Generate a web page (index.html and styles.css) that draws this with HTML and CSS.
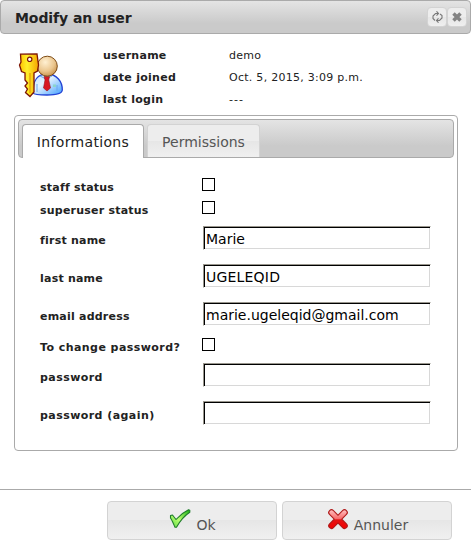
FILE: index.html
```html
<!DOCTYPE html>
<html lang="en">
<head>
<meta charset="utf-8">
<title>Modify an user</title>
<link rel="stylesheet" href="styles.css">
</head>
<body>
<div class="dialog">
  <header class="titlebar">
    <h1>Modify an user</h1>
    <button class="tool" aria-label="Refresh"><svg width="12" height="12" viewBox="0 0 12 12" fill="none" stroke="#777" stroke-width="1.100"><path d="M7 2.500H4.500L2 5V7.500L4 9.500M5.500 .3L7.500 2.500L5.500 4.700M9 3L11 4.500V7L8.500 9.500H6M7.500 7.300L5.500 9.500L7.500 11.700"/></svg></button>
    <button class="tool" aria-label="Close"><svg width="12" height="12" viewBox="0 0 12 12"><path d="M2.500 2.500L9.500 9.500M9.500 2.500L2.500 9.500" stroke="#838383" stroke-width="3.500"/></svg></button>
  </header>
  <section class="summary">
    <svg class="avatar" width="46" height="46" viewBox="0 0 46 46">
      <defs>
        <linearGradient id="body" x1="0" y1="0" x2="1" y2="1"><stop offset="0" stop-color="#c2e4ff"/><stop offset=".4" stop-color="#e4f3ff"/><stop offset="1" stop-color="#3e9dff"/></linearGradient>
        <radialGradient id="head" cx=".4" cy=".3" r=".75"><stop offset="0" stop-color="#fff0d2"/><stop offset=".6" stop-color="#ebc68e"/><stop offset="1" stop-color="#c58f48"/></radialGradient>
        <linearGradient id="key" x1="0" y1="0" x2="1" y2="0"><stop offset="0" stop-color="#ffc000"/><stop offset=".4" stop-color="#fff02a"/><stop offset="1" stop-color="#f5a300"/></linearGradient>
      </defs>
      <path d="M15 40C15 27 19 21 29 21C39 21 44.500 29 44.300 37C44 41 38 42 29 42C21 42 16 41.500 15 40Z" fill="url(#body)" stroke="#2242d4" stroke-width="1.300"/>
      <path d="M22 23L28 26L34 23M19 31V39M39 32V38" fill="none" stroke="#6aa8ee"/>
      <path d="M26 23.500H31.500L30.800 27L32.500 35L29 38L25.500 35L27 27Z" fill="#d81822" stroke="#8f1020" stroke-width=".6"/>
      <path d="M35 31.500H38V34H35Z" fill="#8bd5c9"/>
      <circle cx="29.300" cy="13.200" r="10" fill="url(#head)" stroke="#7d4a13" stroke-width="1"/>
      <path d="M2.500 1.200L19 1L20.500 12L19.500 18L16 20V39L12 43.500L7.500 39.500L9.500 36L7 33L9.500 30L7 27V20L3.500 18.500L1.500 12L3 9Z" fill="url(#key)" stroke="#7d1606" stroke-width="1.300"/>
      <path d="M12 20V40" stroke="#dc8b00" stroke-width="1"/>
      <circle cx="11.700" cy="6.300" r="2.200" fill="#fff" stroke="#7d1606" stroke-width="1.200"/>
    </svg>
    <dl>
      <dt>username</dt><dd>demo</dd>
      <dt>date joined</dt><dd>Oct. 5, 2015, 3:09 p.m.</dd>
      <dt>last login</dt><dd class="empty">---</dd>
    </dl>
  </section>
  <section class="tabs">
    <nav class="tabbar"><a class="tab active">Informations</a><a class="tab">Permissions</a></nav>
    <form class="fields">
      <div class="row short"><label for="staff">staff status</label><input id="staff" type="checkbox"></div>
      <div class="row short"><label for="super">superuser status</label><input id="super" type="checkbox"></div>
      <div class="row"><label for="first">first name</label><input id="first" type="text" value="Marie"></div>
      <div class="row"><label for="last">last name</label><input id="last" type="text" value="UGELEQID"></div>
      <div class="row"><label for="email">email address</label><input id="email" type="text" value="marie.ugeleqid@gmail.com"></div>
      <div class="row short"><label class="wide" for="change">To change password?</label><input id="change" type="checkbox"></div>
      <div class="row"><label class="wide" for="pw">password</label><input id="pw" type="password"></div>
      <div class="row"><label class="wide" for="pw2">password (again)</label><input id="pw2" type="password"></div>
    </form>
  </section>
  <footer class="actions">
    <button class="action"><svg width="24" height="24" viewBox="0 0 24 24"><defs><linearGradient id="green" x1="0" y1="1" x2="1" y2="0"><stop offset="0" stop-color="#58d83c"/><stop offset=".45" stop-color="#baff72"/><stop offset="1" stop-color="#16b010"/></linearGradient></defs><path d="M2.500 7.500L4.500 7L8 11.500C11 8 16 4 20.500 1.800L21.800 2.200V4.300C16 8 12 13 8.500 19.300H7C5.500 16 4 12 2.500 10Z" fill="url(#green)" stroke="#1f7c2b" stroke-width="1.100" stroke-linejoin="round"/></svg><span>Ok</span></button>
    <button class="action"><svg width="24" height="24" viewBox="0 0 24 24"><defs><linearGradient id="red" gradientUnits="userSpaceOnUse" x1="0" y1="2" x2="0" y2="21"><stop offset="0" stop-color="#ffc0c0"/><stop offset=".45" stop-color="#f86c6c"/><stop offset=".52" stop-color="#e31313"/><stop offset="1" stop-color="#f60000"/></linearGradient></defs><g fill="none" stroke-linecap="round"><path d="M5.500 4.500L18.500 17.700M18.500 4.500L5.500 17.700" stroke="#b01a1a" stroke-width="6.600"/><path d="M5.500 4.500L18.500 17.700M18.500 4.500L5.500 17.700" stroke="url(#red)" stroke-width="4.400"/></g></svg><span>Annuler</span></button>
  </footer>
</div>
</body>
</html>
```
FILE: styles.css
```css
* { box-sizing: border-box; }
body { margin: 0; background: #fff; color: #222; font-family: "DejaVu Sans", Verdana, sans-serif; font-size: 14px; }
button { font: inherit; margin: 0; padding: 0; }
.dialog { width: 471px; height: 553px; overflow: hidden; }
.titlebar { display: flex; align-items: center; height: 34px; padding: 0 3px 0 14px; border: 1px solid #aaa; border-radius: 4px; background: linear-gradient(#e4e4e4, #cacaca 70%, #cacaca); }
.titlebar h1 { flex: 1; margin: 2px 0 0; font-size: 14px; line-height: 20px; letter-spacing: -.07px; }
.tool { display: flex; align-items: center; justify-content: center; width: 20px; height: 20px; border: 1px solid #d3d3d3; border-radius: 4px; background: linear-gradient(#ededed 50%, #e6e6e6 50%, #efefef); }
.summary { display: flex; height: 81px; padding: 10px 0 0 18px; }
.avatar { margin-top: 9px; }
.summary dl { display: grid; grid-template-columns: 126px 1fr; grid-auto-rows: 22px; flex: 1; margin: 1px 0 0 39px; font-size: 11px; line-height: 22px; letter-spacing: .27px; }
dt, label { font-weight: bold; }
dd { margin: 0; }
dd.empty { letter-spacing: 1px; }
.tabs { width: 444px; height: 336px; margin-left: 14px; padding: 3px; border: 1px solid #aaa; border-radius: 4px; }
.tabbar { display: flex; gap: 3px; height: 39px; padding: 4px 3px 0; border: 1px solid #aaa; border-radius: 4px; background: linear-gradient(#e4e4e4, #cacaca 70%, #cacaca); }
.tab { width: 113px; height: 33px; border: 1px solid #d3d3d3; border-bottom: 0; border-radius: 4px 4px 0 0; background: linear-gradient(#ededed 50%, #e6e6e6 50%, #f0f0f0); color: #555; line-height: 35px; text-align: center; }
.tab.active { width: 122px; height: 34px; border-color: #aaa; background: #fff; color: #212121; letter-spacing: .33px; }
.fields { padding: 15px 22px 0; }
.row { display: flex; align-items: center; height: 38px; }
.row.short { height: 23px; }
.row label { width: 162px; padding-top: 6px; font-size: 11px; line-height: 16px; letter-spacing: .22px; }
.row label.wide { letter-spacing: .44px; }
input { margin: 0; }
input[type="checkbox"] { appearance: none; width: 13px; height: 13px; border: 1px solid #000; background: #fff; }
.row input:not([type="checkbox"]) { width: 228px; height: 24px; margin-left: 1px; padding: 1px 2px 0; border: 1px solid; border-color: #99968d #fff #fff #99968d; box-shadow: inset 1px 1px #000, inset -1px -1px #d8d8d8; color: #000; font: 14px "DejaVu Sans", sans-serif; }
#last { letter-spacing: .2px; }
.actions { display: flex; gap: 5px; height: 64px; margin-top: 38px; padding: 11px 0 0 107px; border-top: 1px solid #aaa; }
.action { display: flex; align-items: flex-start; justify-content: center; width: 170px; height: 39px; padding-top: 6px; border: 1px solid #d3d3d3; border-radius: 4px; background: linear-gradient(#ededed 50%, #e6e6e6 50%, #f0f0f0); color: #555; }
.action span { margin: 8px 0 0 4px; line-height: 18px; }
```
